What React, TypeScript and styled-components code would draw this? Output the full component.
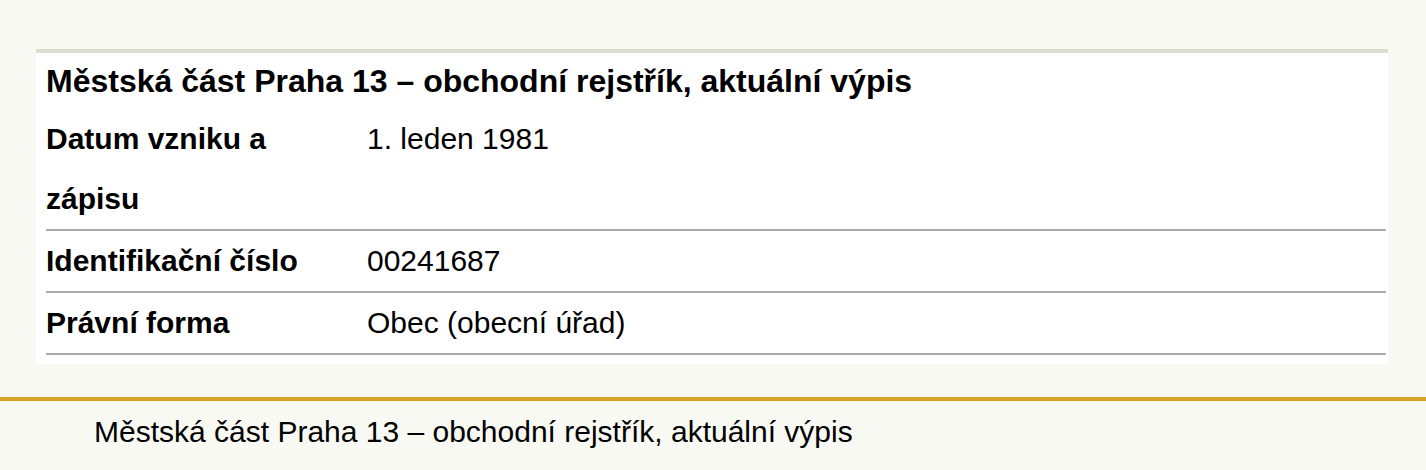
import { createGlobalStyle } from 'styled-components';
import styled from 'styled-components';

const GlobalStyle = createGlobalStyle`
  html, body {
    margin: 0;
    padding: 0;
    background: #f9f9f4;
    font-family: 'Liberation Sans', Arial, sans-serif;
    color: #000;
  }
`;

const rows = [
  { label: 'Datum vzniku a zápisu', value: '1. leden 1981' },
  { label: 'Identifikační číslo', value: '00241687' },
  { label: 'Právní forma', value: 'Obec (obecní úřad)' },
];

const App = () => {
  return (
    <>
      <GlobalStyle />
      <PageEl>
        <Card>
          <Title>Městská část Praha 13 – obchodní rejstřík, aktuální výpis</Title>
          {rows.map((row) => (
            <Row key={row.label}>
              <Label>{row.label}</Label>
              <Value>{row.value}</Value>
            </Row>
          ))}
        </Card>
      </PageEl>
      <Footer>
        <FooterText>Městská část Praha 13 – obchodní rejstřík, aktuální výpis</FooterText>
      </Footer>
    </>
  );
};

const PageEl = styled.div`
  padding: 49px 38px 33px 36px;
`;

const Card = styled.div`
  background: #fff;
  border-top: 4px solid #dcdcd0;
  padding: 0 2px 9px 10px;
`;

const Title = styled.h1`
  margin: 0;
  font-size: 32px;
  font-weight: bold;
  line-height: 56px;
`;

const Row = styled.div`
  display: grid;
  grid-template-columns: 321px 1fr;
  border-bottom: 2px solid #aaa;
  font-size: 30px;
  line-height: 60px;
`;

const Label = styled.div`
  font-weight: bold;
  padding-right: 20px;
`;

const Value = styled.div`
  font-weight: normal;
`;

const Footer = styled.footer`
  border-top: 4px solid #d4a426;
  padding: 10px 0 0 94px;
`;

const FooterText = styled.p`
  margin: 0;
  font-size: 30px;
  line-height: 42px;
`;

export default App;
